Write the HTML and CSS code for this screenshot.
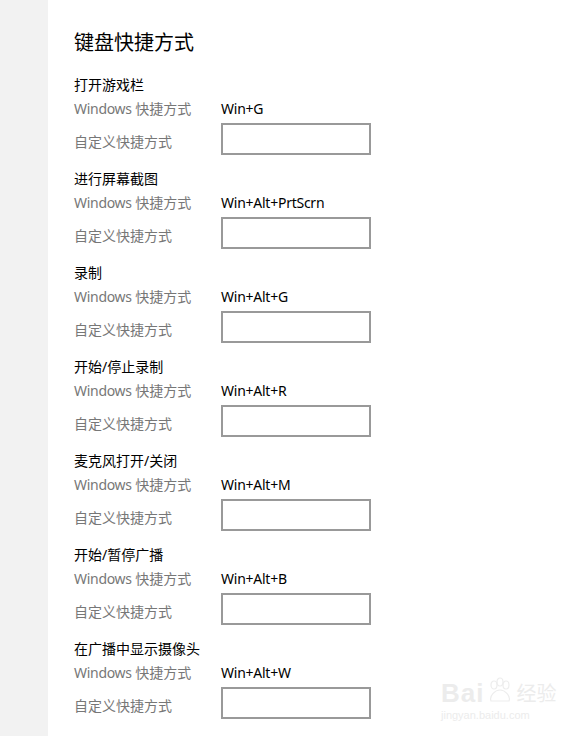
FILE: index.html
```html
<!DOCTYPE html>
<html lang="zh-CN">
<head>
<meta charset="utf-8">
<link rel="stylesheet" href="styles.css">
</head>
<body>
<div class="page">
  <aside class="side"></aside>
  <main class="main">
    <h1 class="title">键盘快捷方式</h1>
    <section class="group">
      <div class="name">打开游戏栏</div>
      <div class="row win"><span class="lbl"><span class="lat">Windows</span> 快捷方式</span><span class="key">Win+G</span></div>
      <div class="row custom"><span class="lbl">自定义快捷方式</span><span class="box"></span></div>
    </section>
    <section class="group">
      <div class="name">进行屏幕截图</div>
      <div class="row win"><span class="lbl"><span class="lat">Windows</span> 快捷方式</span><span class="key">Win+Alt+PrtScrn</span></div>
      <div class="row custom"><span class="lbl">自定义快捷方式</span><span class="box"></span></div>
    </section>
    <section class="group">
      <div class="name">录制</div>
      <div class="row win"><span class="lbl"><span class="lat">Windows</span> 快捷方式</span><span class="key">Win+Alt+G</span></div>
      <div class="row custom"><span class="lbl">自定义快捷方式</span><span class="box"></span></div>
    </section>
    <section class="group">
      <div class="name">开始/停止录制</div>
      <div class="row win"><span class="lbl"><span class="lat">Windows</span> 快捷方式</span><span class="key">Win+Alt+R</span></div>
      <div class="row custom"><span class="lbl">自定义快捷方式</span><span class="box"></span></div>
    </section>
    <section class="group">
      <div class="name">麦克风打开/关闭</div>
      <div class="row win"><span class="lbl"><span class="lat">Windows</span> 快捷方式</span><span class="key">Win+Alt+M</span></div>
      <div class="row custom"><span class="lbl">自定义快捷方式</span><span class="box"></span></div>
    </section>
    <section class="group">
      <div class="name">开始/暂停广播</div>
      <div class="row win"><span class="lbl"><span class="lat">Windows</span> 快捷方式</span><span class="key">Win+Alt+B</span></div>
      <div class="row custom"><span class="lbl">自定义快捷方式</span><span class="box"></span></div>
    </section>
    <section class="group">
      <div class="name">在广播中显示摄像头</div>
      <div class="row win"><span class="lbl"><span class="lat">Windows</span> 快捷方式</span><span class="key">Win+Alt+W</span></div>
      <div class="row custom"><span class="lbl">自定义快捷方式</span><span class="box"></span></div>
    </section>
  </main>
  <div class="mark">
    <div class="mark-top">
      <span class="mark-bai">Bai</span>
      <svg class="paw" width="30" height="30" viewBox="0 0 30 30">
        <ellipse cx="9" cy="9" rx="3" ry="4" fill="none" stroke="#ededed" stroke-width="1.2"/>
        <ellipse cx="15" cy="6" rx="3" ry="4" fill="none" stroke="#ededed" stroke-width="1.2"/>
        <ellipse cx="21" cy="9" rx="3" ry="4" fill="none" stroke="#ededed" stroke-width="1.2"/>
        <path d="M6 25 C4 20 10 14 15 14 C20 14 26 20 24 25 Z" fill="none" stroke="#ededed" stroke-width="1.2"/>
      </svg>
      <span class="mark-jy">经验</span>
    </div>
    <div class="mark-url">jingyan.baidu.com</div>
  </div>
</div>
</body>
</html>
```
FILE: styles.css
```css
html, body {
  margin: 0;
  padding: 0;
  background: #ffffff;
}
body {
  font-family: "Noto Sans", "Noto Sans CJK SC", sans-serif;
  color: #000;
}
.page {
  display: flex;
  min-height: 736px;
  position: relative;
}
.side {
  width: 48px;
  flex: none;
  background: #f2f2f2;
}
.main {
  padding: 29px 0 0 26px;
  flex: 1;
}
.title {
  margin: 0 0 18px 0;
  font-size: 20px;
  font-weight: 400;
  line-height: 28px;
  color: #000;
}
.group {
  margin-bottom: 14px;
}
.name {
  font-size: 14px;
  line-height: 20px;
  color: #000;
}
.row {
  display: flex;
  align-items: center;
  font-size: 14px;
}
.win {
  height: 28px;
}
.win .lbl {
  padding-bottom: 2px;
}
.custom {
  height: 32px;
}
.lbl {
  width: 147px;
  flex: none;
  color: #777777;
}
.lat {
  letter-spacing: -0.3px;
}
.custom .lbl {
  padding-top: 4px;
}
.key {
  color: #000;
  letter-spacing: -0.25px;
  padding-bottom: 2px;
}
.box {
  display: block;
  box-sizing: border-box;
  width: 150px;
  height: 32px;
  border: 2px solid #999999;
  background: #fff;
}
.mark {
  position: absolute;
  left: 441px;
  top: 674px;
  color: #ececec;
  font-family: "Liberation Sans", "Noto Sans CJK SC", sans-serif;
}
.mark-top {
  display: flex;
  align-items: flex-end;
  height: 32px;
}
.mark-bai {
  font-size: 26px;
  font-weight: 700;
  line-height: 26px;
  letter-spacing: 1px;
}
.paw {
  margin: 0 1px;
}
.mark-jy {
  font-size: 20px;
  line-height: 24px;
}
.mark-url {
  font-size: 11px;
  line-height: 14px;
  margin-top: 2px;
}
```
